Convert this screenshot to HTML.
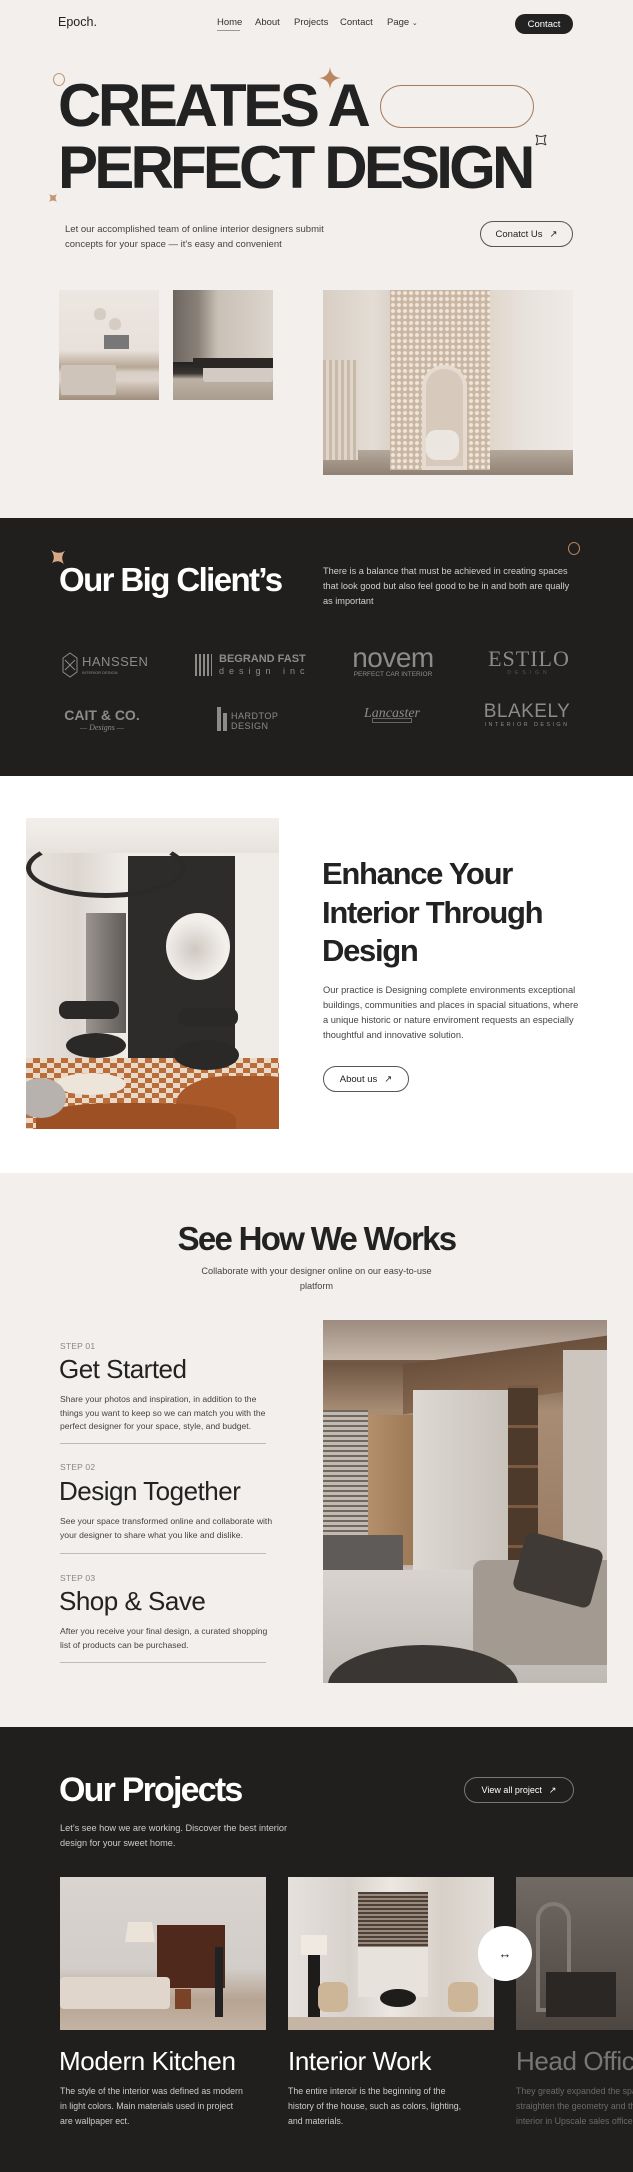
<!DOCTYPE html>
<html><head><meta charset="utf-8">
<style>
*{margin:0;padding:0;box-sizing:border-box}
body{width:633px;height:2172px;position:relative;background:#f2efec;font-family:"Liberation Sans",sans-serif;color:#222;overflow:hidden}
.a{position:absolute}
.btn{position:absolute;border:1px solid #555;border-radius:14px;font-size:9.5px;display:flex;align-items:center;justify-content:center;gap:7px}
.p{font-size:9.2px;line-height:14.6px;color:#444}
.img{position:absolute;overflow:hidden}
.logo{position:absolute;color:#8d8b88;text-align:center}
.step{font-size:8.5px;color:#888;letter-spacing:.2px}
.st{font-size:26px;color:#222;letter-spacing:-.5px}
.hr{position:absolute;left:60px;width:206px;height:1px;background:#bbb}
</style></head><body>

<!-- NAV -->
<div class="a" style="left:58px;top:15px;font-size:12.5px;color:#222">Epoch.</div>
<div class="a" style="left:217px;top:17px;font-size:9.5px;color:#333">Home</div>
<div class="a" style="left:217px;top:30px;width:23px;height:1px;background:#999"></div>
<div class="a" style="left:255px;top:17px;font-size:9.5px;color:#333">About</div>
<div class="a" style="left:294px;top:17px;font-size:9.5px;color:#333">Projects</div>
<div class="a" style="left:340px;top:17px;font-size:9.5px;color:#333">Contact</div>
<div class="a" style="left:387px;top:17px;font-size:9.5px;color:#333">Page <span style="font-size:7px">&#8964;</span></div>
<div class="a" style="left:515px;top:14px;width:58px;height:20px;background:#222;border-radius:10px;color:#fff;font-size:9.5px;display:flex;align-items:center;justify-content:center">Contact</div>

<!-- HERO -->
<div class="a" style="left:53px;top:73px;width:12px;height:13px;border:1px solid #c4956e;border-radius:50%"></div>
<div class="a" style="left:58px;top:75px;font-size:60px;font-weight:bold;letter-spacing:-3.4px;line-height:62px;color:#222">CREATES A<br><span style="letter-spacing:-3.8px">PERFECT DESIGN</span></div>
<svg class="a" style="left:319px;top:67px" width="22" height="22" viewBox="0 0 22 22"><path d="M11 0 Q12 10 22 11 Q12 12 11 22 Q10 12 0 11 Q10 10 11 0Z" fill="#b9865f"/></svg>
<svg class="a" style="left:535px;top:134px" width="12" height="12" viewBox="0 0 12 12"><path d="M1 1 Q6 4 11 1 Q8 6 11 11 Q6 8 1 11 Q4 6 1 1Z" fill="none" stroke="#333" stroke-width="1"/></svg>
<svg class="a" style="left:49px;top:194px" width="8" height="8" viewBox="0 0 8 8"><path d="M0 0 Q4 3 8 0 Q5 4 8 8 Q4 5 0 8 Q3 4 0 0Z" fill="#c4956e"/></svg>
<div class="a" style="left:380px;top:85px;width:154px;height:43px;border:1px solid #a87a5a;border-radius:22px"></div>
<div class="a p" style="left:65px;top:222px;font-size:9.5px;line-height:15px">Let our accomplished team of online interior designers submit<br>concepts for your space — it's easy and convenient</div>
<div class="btn" style="left:480px;top:221px;width:93px;height:26px;border-radius:13px;color:#222">Conatct Us <span>&#8599;</span></div>

<div class="img" style="left:59px;top:290px;width:100px;height:110px;background:linear-gradient(180deg,#ede7e2 0%,#e8e0d9 55%,#b7a796 70%,#d8cfc6 75%,#ddd3ca 82%,#9f8d7c 100%)">
 <div class="a" style="left:45px;top:45px;width:25px;height:14px;background:#777"></div>
 <div class="a" style="left:2px;top:75px;width:55px;height:30px;background:#cfc4b9;border-radius:2px"></div>
 <div class="a" style="left:35px;top:18px;width:12px;height:12px;background:#d5ccc3;border-radius:50% 50% 40% 40%"></div>
 <div class="a" style="left:50px;top:28px;width:12px;height:12px;background:#d5ccc3;border-radius:50% 50% 40% 40%"></div>
</div>
<div class="img" style="left:173px;top:290px;width:100px;height:110px;background:linear-gradient(90deg,#6c6560 0%,#8a8178 25%,#c9c0b6 45%,#ddd6ce 100%)">
 <div class="a" style="left:0;top:72px;width:100px;height:38px;background:linear-gradient(180deg,#222 0%,#3a3532 30%,#bdb2a6 45%,#a99c8f 100%)"></div>
 <div class="a" style="left:30px;top:70px;width:70px;height:22px;background:#d3cbc3;border-radius:3px"></div>
 <div class="a" style="left:20px;top:68px;width:80px;height:10px;background:#2a2725"></div>
</div>
<div class="img" style="left:323px;top:290px;width:250px;height:185px;background:linear-gradient(90deg,#d8cec4 0%,#e4ddd5 20%,#cbbdaf 40%,#ddd0c2 60%,#e8e2dc 80%,#efeae6 100%)">
 <div class="a" style="left:0;top:160px;width:250px;height:25px;background:linear-gradient(180deg,#b4a89c,#8f8173)"></div>
 <div class="a" style="left:0;top:70px;width:35px;height:100px;background:repeating-linear-gradient(90deg,#c9b9a8 0 3px,#e0d5ca 3px 6px)"></div>
 <div class="a" style="left:67px;top:0;width:100px;height:180px;background:radial-gradient(circle,#efe6dc 1.5px,#c9b5a1 2.5px) 0 0/6px 6px"></div>
 <div class="a" style="left:99px;top:75px;width:45px;height:105px;border:4px solid #e6dbd0;border-radius:22px 22px 0 0;background:#d7c9bb"></div>
 <div class="a" style="left:103px;top:140px;width:33px;height:30px;background:#ece6e0;border-radius:10px"></div>
</div>

<!-- CLIENTS -->
<div class="a" style="left:0;top:518px;width:633px;height:258px;background:#201f1e"></div>
<svg class="a" style="left:51px;top:550px" width="14" height="14" viewBox="0 0 14 14"><path d="M0 0 Q7 5 14 1 Q9 7 13 14 Q7 9 1 13 Q5 7 0 0Z" fill="#d7a986"/></svg>
<div class="a" style="left:568px;top:542px;width:12px;height:13px;border:1px solid #b9865f;border-radius:50%"></div>
<div class="a" style="left:59px;top:561px;font-size:33px;font-weight:bold;color:#fff;letter-spacing:-1.6px">Our Big Client’s</div>
<div class="a p" style="left:323px;top:564px;color:#cfcfcf;font-size:9.2px;line-height:15px">There is a balance that must be achieved in creating spaces<br>that look good but also feel good to be in and both are qually<br>as important</div>

<div class="logo" style="left:62px;top:652px;width:80px;text-align:left">
 <svg class="a" style="left:0;top:0" width="16" height="26" viewBox="0 0 16 26"><path d="M8 1 L15 6 L15 20 L8 25 L1 20 L1 6Z M3 8 L13 18 M13 8 L3 18" fill="none" stroke="#8d8b88"/></svg>
 <div class="a" style="left:20px;top:2px;font-size:13px;letter-spacing:.5px">HANSSEN</div>
 <div class="a" style="left:20px;top:18px;font-size:4px">INTERIOR DESIGN</div>
</div>
<div class="logo" style="left:195px;top:654px;width:105px;text-align:left">
 <div class="a" style="left:0;top:0;width:17px;height:22px;background:repeating-linear-gradient(90deg,#8d8b88 0 2px,transparent 2px 4px)"></div>
 <div class="a" style="left:24px;top:-1px;font-size:11px;font-weight:bold;white-space:nowrap">BEGRAND FAST</div>
 <div class="a" style="left:24px;top:12px;font-size:9px;letter-spacing:5px;white-space:nowrap">design inc</div>
</div>
<div class="logo" style="left:350px;top:645px;width:86px">
 <div style="font-size:28px;line-height:26px;letter-spacing:-.5px">novem</div>
 <div style="font-size:6.5px;white-space:nowrap">PERFECT CAR INTERIOR</div>
</div>
<div class="logo" style="left:487px;top:648px;width:84px">
 <div style="font-family:'Liberation Serif',serif;font-size:22px;line-height:22px;letter-spacing:1px">ESTILO</div>
 <div style="font-size:5px;letter-spacing:4px;color:#555">DESIGN</div>
</div>
<div class="logo" style="left:60px;top:707px;width:84px">
 <div style="font-size:14px;font-weight:bold;line-height:16px;white-space:nowrap">CAIT &amp; CO.</div>
 <div style="font-size:8px;font-style:italic;font-family:'Liberation Serif',serif">— Designs —</div>
</div>
<div class="logo" style="left:217px;top:707px;width:70px;text-align:left">
 <div class="a" style="left:0;top:0;width:4px;height:24px;background:#8d8b88"></div>
 <div class="a" style="left:6px;top:6px;width:4px;height:18px;background:#8d8b88"></div>
 <div class="a" style="left:14px;top:4px;font-size:9px;line-height:10px;letter-spacing:.5px">HARDTOP<br>DESIGN</div>
</div>
<div class="logo" style="left:362px;top:706px;width:60px">
 <div style="font-family:'Liberation Serif',serif;font-style:italic;font-size:14px">Lancaster</div>
 <div style="margin:0 10px;border:1px solid #666;height:5px;margin-top:-4px"></div>
</div>
<div class="logo" style="left:480px;top:702px;width:94px">
 <div style="font-size:19px;line-height:20px;letter-spacing:.5px">BLAKELY</div>
 <div style="font-size:5.5px;letter-spacing:2.4px;white-space:nowrap">INTERIOR DESIGN</div>
</div>

<!-- ENHANCE -->
<div class="a" style="left:0;top:776px;width:633px;height:397px;background:#fff"></div>
<div class="img" style="left:26px;top:818px;width:253px;height:311px;background:linear-gradient(90deg,#e9e4df 0%,#ddd6d0 20%,#f0ede9 40%,#efece8 100%)">
 <div class="a" style="left:102px;top:38px;width:107px;height:237px;background:#2e2c2b"></div>
 <div class="a" style="left:140px;top:95px;width:64px;height:67px;border-radius:50%;background:radial-gradient(circle at 45% 55%,#cfc8c1,#f2efeb 60%)"></div>
 <div class="a" style="left:0;top:0;width:253px;height:35px;background:linear-gradient(180deg,#f3f0ec,#e7e2dc)"></div>
 <div class="a" style="left:0;top:20px;width:160px;height:60px;border:5px solid #2b2a29;border-radius:50%;border-top-color:transparent"></div>
 <div class="a" style="left:60px;top:95px;width:40px;height:120px;background:linear-gradient(90deg,#9a948f,#5f5b58)"></div>
 <div class="a" style="left:0;top:240px;width:253px;height:71px;background:repeating-conic-gradient(#b86d3a 0 25%,#ead9c6 0 50%) 0 0/14px 10px"></div>
 <div class="a" style="left:40px;top:215px;width:60px;height:25px;border-radius:50%;background:#2a2928"></div>
 <div class="a" style="left:148px;top:222px;width:65px;height:30px;border-radius:50%;background:#2a2928"></div>
 <div class="a" style="left:33px;top:183px;width:60px;height:18px;border-radius:8px;background:#2a2928"></div>
 <div class="a" style="left:152px;top:190px;width:60px;height:18px;border-radius:8px;background:#2a2928"></div>
 <div class="a" style="left:30px;top:255px;width:70px;height:22px;border-radius:50%;background:#ede4da"></div>
 <div class="a" style="left:150px;top:258px;width:130px;height:70px;border-radius:40% 30% 0 0;background:#a9582a"></div>
 <div class="a" style="left:10px;top:285px;width:200px;height:40px;border-radius:40% 40% 0 0;background:#9c5024"></div>
 <div class="a" style="left:-10px;top:260px;width:50px;height:40px;border-radius:50%;background:#b7b2ad"></div>
</div>
<div class="a" style="left:322px;top:855px;font-size:31px;font-weight:bold;line-height:38.5px;letter-spacing:-1.3px;color:#222">Enhance Your<br>Interior Through<br>Design</div>
<div class="a p" style="left:323px;top:983px;line-height:15px;font-size:9.3px">Our practice is Designing complete environments exceptional<br>buildings, communities and places in spacial situations, where<br>a unique historic or nature enviroment requests an especially<br>thoughtful and innovative solution.</div>
<div class="btn" style="left:323px;top:1066px;width:86px;height:26px;border-radius:13px;color:#222">About us <span>&#8599;</span></div>

<!-- HOW WE WORK -->
<div class="a" style="left:0;top:1220px;width:633px;text-align:center;font-size:33px;font-weight:bold;letter-spacing:-1.7px;color:#222">See How We Works</div>
<div class="a p" style="left:0;top:1264px;width:633px;text-align:center;line-height:15px">Collaborate with your designer online on our easy-to-use<br>platform</div>

<div class="a step" style="left:60px;top:1341px">STEP 01</div>
<div class="a st" style="left:59px;top:1354px">Get Started</div>
<div class="a p" style="left:60px;top:1393px;font-size:8.6px;line-height:13.6px">Share your photos and inspiration, in addition to the<br>things you want to keep so we can match you with the<br>perfect designer for your space, style, and budget.</div>
<div class="hr" style="top:1443px"></div>
<div class="a step" style="left:60px;top:1462px">STEP 02</div>
<div class="a st" style="left:59px;top:1476px">Design Together</div>
<div class="a p" style="left:60px;top:1515px;font-size:8.6px;line-height:13.6px">See your space transformed online and collaborate with<br>your designer to share what you like and dislike.</div>
<div class="hr" style="top:1553px"></div>
<div class="a step" style="left:60px;top:1573px">STEP 03</div>
<div class="a st" style="left:59px;top:1586px">Shop &amp; Save</div>
<div class="a p" style="left:60px;top:1625px;font-size:8.6px;line-height:13.6px">After you receive your final design, a curated shopping<br>list of products can be purchased.</div>
<div class="hr" style="top:1662px"></div>

<div class="img" style="left:323px;top:1320px;width:284px;height:363px;background:linear-gradient(180deg,#8e7e70 0%,#6e5644 12%,#a88d74 25%,#9a7d64 60%,#cbc4bd 70%,#bdb6ae 100%)">
 <div class="a" style="left:0;top:0;width:284px;height:40px;background:linear-gradient(180deg,#9c8b7e,#c6b8ab)"></div>
 <div class="a" style="left:80px;top:30px;width:204px;height:50px;background:linear-gradient(180deg,#6a503c,#85664e);transform:skewY(-8deg)"></div>
 <div class="a" style="left:0;top:90px;width:45px;height:130px;background:repeating-linear-gradient(180deg,#6f6760 0 2px,#c2b9b0 2px 5px)"></div>
 <div class="a" style="left:45px;top:95px;width:45px;height:150px;background:linear-gradient(90deg,#b48f6b,#9c7956)"></div>
 <div class="a" style="left:90px;top:70px;width:95px;height:180px;background:linear-gradient(90deg,#ddd8d2,#c8c2bb)"></div>
 <div class="a" style="left:185px;top:65px;width:30px;height:210px;background:repeating-linear-gradient(180deg,#7a5a40 0 3px,#4d3a2b 3px 40px)"></div>
 <div class="a" style="left:240px;top:30px;width:44px;height:220px;background:#ccc6bf"></div>
 <div class="a" style="left:0;top:215px;width:80px;height:50px;background:#5e5b58"></div>
 <div class="a" style="left:0;top:250px;width:284px;height:113px;background:linear-gradient(180deg,#d8d3ce,#bfbab4)"></div>
 <div class="a" style="left:150px;top:240px;width:134px;height:105px;background:#a39b92;border-radius:10px 0 0 0"></div>
 <div class="a" style="left:195px;top:220px;width:80px;height:60px;background:#3f3a36;border-radius:8px;transform:rotate(15deg)"></div>
 <div class="a" style="left:5px;top:325px;width:190px;height:80px;border-radius:50%;background:#3a3633"></div>
</div>

<!-- PROJECTS -->
<div class="a" style="left:0;top:1727px;width:633px;height:445px;background:#201f1e"></div>
<div class="a" style="left:59px;top:1771px;font-size:34px;font-weight:bold;letter-spacing:-1.8px;color:#fff">Our Projects</div>
<div class="btn" style="left:464px;top:1777px;width:110px;height:26px;border-color:#777;color:#fff;font-size:9px">View all project <span>&#8599;</span></div>
<div class="a p" style="left:60px;top:1821px;color:#ccc;line-height:15px">Let’s see how we are working. Discover the best interior<br>design for your sweet home.</div>

<div class="img" style="left:60px;top:1877px;width:206px;height:153px;background:linear-gradient(180deg,#d9d4cf 0%,#d2cdc8 60%,#b7a493 80%,#c4b3a3 100%)">
 <div class="a" style="left:97px;top:48px;width:68px;height:63px;background:#4f2a1c"></div>
 <div class="a" style="left:65px;top:45px;width:30px;height:20px;background:#ebe2d8;clip-path:polygon(10% 0,90% 0,100% 100%,0 100%)"></div>
 <div class="a" style="left:0;top:100px;width:110px;height:32px;background:#e0d6cc;border-radius:4px"></div>
 <div class="a" style="left:155px;top:70px;width:8px;height:70px;background:#222"></div>
 <div class="a" style="left:115px;top:112px;width:16px;height:20px;background:#7a4328"></div>
</div>
<div class="img" style="left:288px;top:1877px;width:206px;height:153px;background:linear-gradient(90deg,#e5e1dd 0%,#d8d2cc 30%,#ede7e1 50%,#d7d0c8 75%,#e2ddd8 100%)">
 <div class="a" style="left:70px;top:15px;width:70px;height:55px;background:repeating-linear-gradient(180deg,#4c4038 0 2px,#9a8a7c 2px 4px)"></div>
 <div class="a" style="left:70px;top:70px;width:70px;height:50px;background:#e8e2dc"></div>
 <div class="a" style="left:20px;top:60px;width:12px;height:82px;background:#1d1c1b"></div>
 <div class="a" style="left:13px;top:58px;width:26px;height:20px;background:#efe9e2"></div>
 <div class="a" style="left:30px;top:105px;width:30px;height:30px;background:#cdb597;border-radius:8px"></div>
 <div class="a" style="left:160px;top:105px;width:30px;height:30px;background:#cdb597;border-radius:8px"></div>
 <div class="a" style="left:92px;top:112px;width:36px;height:18px;background:#1e1d1c;border-radius:50%"></div>
 <div class="a" style="left:0;top:140px;width:206px;height:13px;background:#c5b5a4"></div>
</div>
<div class="img" style="left:516px;top:1877px;width:120px;height:153px;background:linear-gradient(180deg,#8d837b,#6e655e 60%,#5d544d);opacity:.75">
 <div class="a" style="left:20px;top:25px;width:35px;height:110px;border:4px solid #a59a90;border-radius:18px 18px 0 0"></div>
 <div class="a" style="left:30px;top:95px;width:70px;height:45px;background:#2f2a26"></div>
</div>
<div class="a" style="left:478px;top:1926px;width:54px;height:55px;border-radius:50%;background:#fff;display:flex;align-items:center;justify-content:center;font-size:13px;color:#222">&#8596;</div>

<div class="a" style="left:59px;top:2046px;font-size:26px;color:#fff;letter-spacing:-.4px;white-space:nowrap">Modern Kitchen</div>
<div class="a" style="left:288px;top:2046px;font-size:26px;color:#fff;letter-spacing:-.4px;white-space:nowrap">Interior Work</div>
<div class="a" style="left:516px;top:2046px;font-size:26px;color:#777;letter-spacing:-.4px;white-space:nowrap">Head Office</div>
<div class="a p" style="left:60px;top:2084px;color:#ccc;font-size:8.8px;line-height:15px">The style of the interior was defined as modern<br>in light colors. Main materials used in project<br>are wallpaper ect.</div>
<div class="a p" style="left:288px;top:2084px;color:#ccc;font-size:8.8px;line-height:15px">The entire interoir is the beginning of the<br>history of the house, such as colors, lighting,<br>and materials.</div>
<div class="a p" style="left:516px;top:2084px;color:#6c6a68;font-size:8.8px;line-height:15px;white-space:nowrap">They greatly expanded the space to<br>straighten the geometry and the<br>interior in Upscale sales office</div>
</body></html>
